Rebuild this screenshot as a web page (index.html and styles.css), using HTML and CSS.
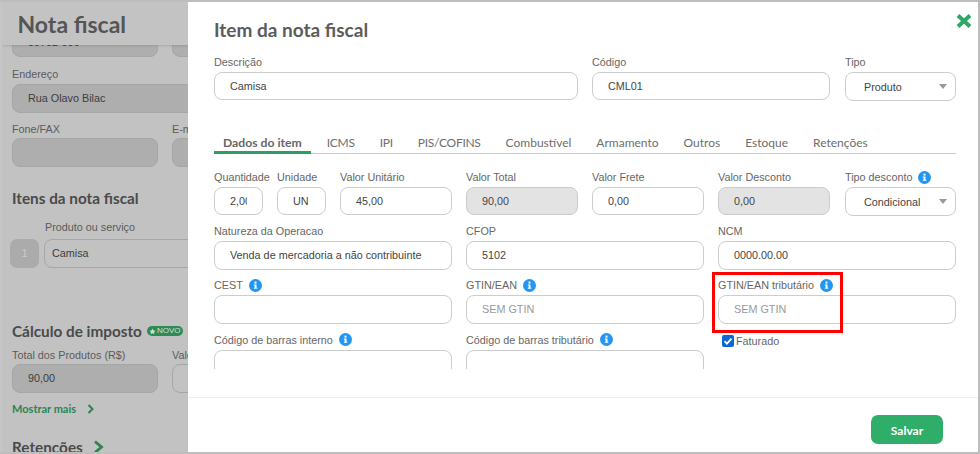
FILE: index.html
```html
<!DOCTYPE html>
<html lang="pt-BR">
<head>
<meta charset="utf-8">
<title>Item da nota fiscal</title>
<link rel="stylesheet" href="styles.css">
</head>
<body>
<div class="frame">
  <aside class="page">
    <header class="page-head"><h1>Nota fiscal</h1></header>
    <div class="page-body">
      <div class="bg-row r-cep">
        <div class="bg-col"><div class="bg-input dis">59702-000</div></div>
        <div class="bg-col"><div class="bg-input dis"></div></div>
      </div>
      <div class="bg-label l-end">Endereço</div>
      <div class="bg-input dis wide">Rua Olavo Bilac</div>
      <div class="bg-row r-fone">
        <div class="bg-col"><div class="bg-label">Fone/FAX</div><div class="bg-input dis"></div></div>
        <div class="bg-col"><div class="bg-label">E-mail</div><div class="bg-input dis"></div></div>
      </div>
      <h2 class="bg-title t-itens">Itens da nota fiscal</h2>
      <div class="bg-label l-prod">Produto ou serviço</div>
      <div class="item-row">
        <div class="item-num">1</div>
        <div class="bg-input item-input">Camisa</div>
      </div>
      <div class="imposto-head">
        <h2 class="bg-title">Cálculo de imposto</h2>
        <span class="novo"><svg class="novo-star" viewBox="0 0 10 10"><path d="M5 .8l1.300 2.800 3 .4-2.200 2.100.6 3L5 7.600 2.300 9.100l.6-3L.7 4l3-.4z"/></svg>NOVO</span>
      </div>
      <div class="bg-row r-total">
        <div class="bg-col"><div class="bg-label">Total dos Produtos (R$)</div><div class="bg-input dis">90,00</div></div>
        <div class="bg-col"><div class="bg-label">Valor</div><div class="bg-input"></div></div>
      </div>
      <div class="more">Mostrar mais
        <svg class="chev-s" viewBox="0 0 8 10"><path d="M1.500 1l4 4-4 4"/></svg>
      </div>
      <div class="ret">
        <h2 class="bg-title">Retenções</h2>
        <svg class="chev-l" viewBox="0 0 12 14"><path d="M2 1.500l6.500 5.500L2 12.500"/></svg>
      </div>
    </div>
  </aside>

  <main class="modal">
    <button class="close" type="button" aria-label="Fechar">
      <svg viewBox="0 0 16 14"><path d="M2 1.500l12 11M14 1.500l-12 11"/></svg>
    </button>
    <h2 class="modal-title">Item da nota fiscal</h2>

    <div class="grid top">
      <div class="f s6"><label>Descrição</label><div class="input">Camisa</div></div>
      <div class="f s4"><label>Código</label><div class="input">CML01</div></div>
      <div class="f s2 last"><label>Tipo</label><div class="select">Produto<i class="caret"></i></div></div>
    </div>

    <nav class="tabs">
      <a class="tab on">Dados do item</a>
      <a class="tab caps">ICMS</a>
      <a class="tab caps">IPI</a>
      <a class="tab caps">PIS/COFINS</a>
      <a class="tab">Combustível</a>
      <a class="tab">Armamento</a>
      <a class="tab">Outros</a>
      <a class="tab">Estoque</a>
      <a class="tab">Retenções</a>
    </nav>

    <div class="scroll">
      <div class="grid form">
        <div class="f s1"><label>Quantidade</label><div class="input"><span class="clip">2,00</span></div></div>
        <div class="f s1"><label>Unidade</label><div class="input">UN</div></div>
        <div class="f s2"><label>Valor Unitário</label><div class="input">45,00</div></div>
        <div class="f s2"><label>Valor Total</label><div class="input off">90,00</div></div>
        <div class="f s2"><label>Valor Frete</label><div class="input">0,00</div></div>
        <div class="f s2"><label>Valor Desconto</label><div class="input off">0,00</div></div>
        <div class="f s2 last"><label>Tipo desconto<svg class="info" viewBox="0 0 13 13"><use href="#i"/></svg></label><div class="select">Condicional<i class="caret"></i></div></div>

        <div class="f s4"><label>Natureza da Operacao</label><div class="input tall">Venda de mercadoria a não contribuinte</div></div>
        <div class="f s4"><label>CFOP</label><div class="input tall">5102</div></div>
        <div class="f s4"><label>NCM</label><div class="input tall">0000.00.00</div></div>

        <div class="f s4"><label>CEST<svg class="info" viewBox="0 0 13 13"><use href="#i"/></svg></label><div class="input tall"></div></div>
        <div class="f s4"><label>GTIN/EAN<svg class="info" viewBox="0 0 13 13"><use href="#i"/></svg></label><div class="input tall ph">SEM GTIN</div></div>
        <div class="f s4"><label>GTIN/EAN tributário<svg class="info" viewBox="0 0 13 13"><use href="#i"/></svg></label><div class="input tall ph">SEM GTIN</div></div>

        <div class="f s4"><label>Código de barras interno<svg class="info" viewBox="0 0 13 13"><use href="#i"/></svg></label><div class="input tall"></div></div>
        <div class="f s4"><label>Código de barras tributário<svg class="info" viewBox="0 0 13 13"><use href="#i"/></svg></label><div class="input tall"></div></div>
        <div class="f s4 check">
          <span class="box"><svg viewBox="0 0 12 12"><path d="M2.500 6.200l2.400 2.400 4.600-5"/></svg></span>Faturado
        </div>
      </div>
    </div>

    <footer class="foot"><button class="save" type="button">Salvar</button></footer>
    <div class="mark"></div>
  </main>
</div>
<svg class="defs" width="0" height="0" aria-hidden="true">
  <symbol id="i" viewBox="0 0 13 13">
    <circle cx="6.500" cy="6.500" r="6.500" fill="#2196f3"/>
    <rect x="5.500" y="2.600" width="2" height="2" fill="#fff"/>
    <path d="M4.800 5.500h2.700v3.300h.8v1H4.800v-1h.8V6.500h-.8z" fill="#fff"/>
  </symbol>
</svg>
</body>
</html>
```
FILE: styles.css
```css
* { box-sizing: border-box; }
html, body { margin: 0; padding: 0; }
body { width: 980px; height: 454px; overflow: hidden; font-family: "Liberation Sans", Arial, sans-serif; background: #bdbdbd; }
.defs { position: absolute; }

.frame { display: flex; width: 980px; height: 454px; padding: 2px 2px 2px 0; background: #bdbdbd; }

/* dimmed page behind the modal */
.page { width: 188px; flex: none; overflow: hidden; background: #c2c2c2; color: #3d3d3d; position: relative; border-left: 2px solid #c6c6c6; }
.page-head { position: relative; z-index: 2; height: 43px; background: #c3c3c3; box-shadow: 0 1px 2px rgba(0,0,0,.12); padding: 8px 0 0 15.500px; }
.page-head h1 { margin: 0; font: 700 23px/28px Lato, sans-serif; color: #555; }
.page-body { width: 330px; margin-top: -17px; padding-left: 10px; }
.bg-row { display: flex; gap: 14px; }
.bg-col { width: 146px; flex: none; }
.bg-input { height: 29px; width: 146px; border: 1px solid #a6a6a6; border-radius: 8px; font-size: 10.800px; line-height: 27px; padding-left: 15px; color: #3d3d3d; background: #c2c2c2; }
.bg-input.dis { background: #aeaeae; }
.bg-input.wide { width: 320px; }
.bg-label { font-size: 10.800px; line-height: 14px; color: #5b5b5b; height: 16px; white-space: nowrap; }
.l-end { margin-top: 10px; height: 17px; }
.r-fone { margin-top: 9px; }
.bg-title { margin: 0; font: 700 15.300px/18px Lato, sans-serif; color: #4a4a4a; white-space: nowrap; }
.t-itens { margin-top: 22px; }
.l-prod { margin: 13px 0 0 33px; height: 19px; }
.item-row { display: flex; gap: 5px; margin-left: -2px; }
.item-num { width: 29px; height: 29px; background: #ababab; border-radius: 7px; color: #c9c9c9; font-size: 11px; line-height: 29px; text-align: center; flex: none; }
.item-input { width: 280px; padding-left: 7px; }
.imposto-head { display: flex; align-items: center; gap: 5px; margin-top: 54px; height: 18px; }
.novo { display: flex; align-items: center; gap: 1px; height: 10px; width: 36px; border-radius: 5px; background: #2e8b57; color: #cfe0d5; font-size: 8px; line-height: 10px; padding-left: 2px; }
.novo-star { width: 7px; height: 7px; fill: #cfe0d5; flex: none; }
.r-total { margin-top: 8px; }
.more { display: flex; align-items: center; gap: 11px; margin-top: 8px; height: 16px; font: 700 11px/16px Lato, sans-serif; color: #2d8453; white-space: nowrap; }
.chev-s { width: 8px; height: 10px; fill: none; stroke: #2d8453; stroke-width: 2; }
.ret { display: flex; align-items: center; gap: 10px; margin-top: 21px; }
.chev-l { width: 12px; height: 14px; fill: none; stroke: #2d8453; stroke-width: 2.800; }

/* modal */
.modal { position: relative; flex: 1; background: #fff; display: flex; flex-direction: column; color: #666; }
.modal-title { margin: 17px 0 0 26px; font: 700 19px/22px Lato, sans-serif; color: #5c5c5c; height: 22px; }
.close { position: absolute; top: 12px; right: 6px; width: 16px; height: 14px; padding: 0; border: 0; background: none; }
.close svg { display: block; width: 16px; height: 14px; fill: none; stroke: #2fa866; stroke-width: 4; }

.grid { display: grid; grid-template-columns: repeat(12, 49px); column-gap: 14px; margin-left: 26px; }
.s1 { grid-column: span 1; }
.s2 { grid-column: span 2; }
.s4 { grid-column: span 4; }
.s6 { grid-column: span 6; }
.f { min-width: 0; }
.last { margin-left: 1px; }
.f label { display: flex; align-items: center; gap: 6px; height: 14px; margin-bottom: 3px; font-size: 10.800px; line-height: 14px; color: #666; white-space: nowrap; }
.top { margin-top: 14px; }
.input { height: 28px; border: 1px solid #ccc; border-radius: 8px; background: #fff; padding: 0 15px; font-size: 10.800px; line-height: 26px; color: #444; white-space: nowrap; overflow: hidden; }
.input.tall { height: 29px; line-height: 27px; }
.input.off { background: #e3e3e3; }
.input.ph { color: #999; }
.clip { display: block; overflow: hidden; }
.select { position: relative; height: 29px; margin: 1px 0 -2px; border: 1px solid #ccc; border-radius: 8px; background: #fff; padding-left: 18px; font-size: 10.800px; line-height: 28px; color: #444; white-space: nowrap; }
.top .select { margin: 2px 0 -3px; }
.caret { position: absolute; right: 8px; top: 11px; width: 0; height: 0; border-left: 4px solid transparent; border-right: 4px solid transparent; border-top: 5px solid #999; }
.info { width: 13px; height: 13px; flex: none; }

.tabs { display: flex; gap: 7px; margin: 31px 22px 0 26px; height: 23px; border-bottom: 1px solid #ccc; }
.tab { padding: 0 9px; height: 23px; font: 400 12px/24px Lato, sans-serif; color: #6e6e6e; white-space: nowrap; }
.tab.caps { letter-spacing: -.28px; }
.tab.on { font-weight: 700; font-size: 12.200px; border-bottom: 3px solid #2f9e63; color: #666; }

.scroll { margin-top: 16px; height: 199px; overflow: hidden; flex: none; }
.form { row-gap: 8.500px; }
.check { display: flex; align-items: center; height: 13px; margin: 2px 0 0 4px; font-size: 10.800px; color: #666; }
.box { width: 12px; height: 12px; border-radius: 2px; background: #0b66d8; margin-right: 2px; flex: none; }
.box svg { display: block; fill: none; stroke: #fff; stroke-width: 1.800; }

.foot { flex: 1; border-top: 1px solid #eee; margin-top: 28px; display: flex; justify-content: flex-end; align-items: flex-start; padding: 17px 35px 0 0; }
.save { width: 72px; height: 29px; border: 0; border-radius: 7px; background: #2fae6a; color: #fff; font: 700 12px/29px Lato, sans-serif; }

.mark { position: absolute; left: 524px; top: 270px; width: 131px; height: 61px; border: 3px solid #f00; pointer-events: none; }
```
